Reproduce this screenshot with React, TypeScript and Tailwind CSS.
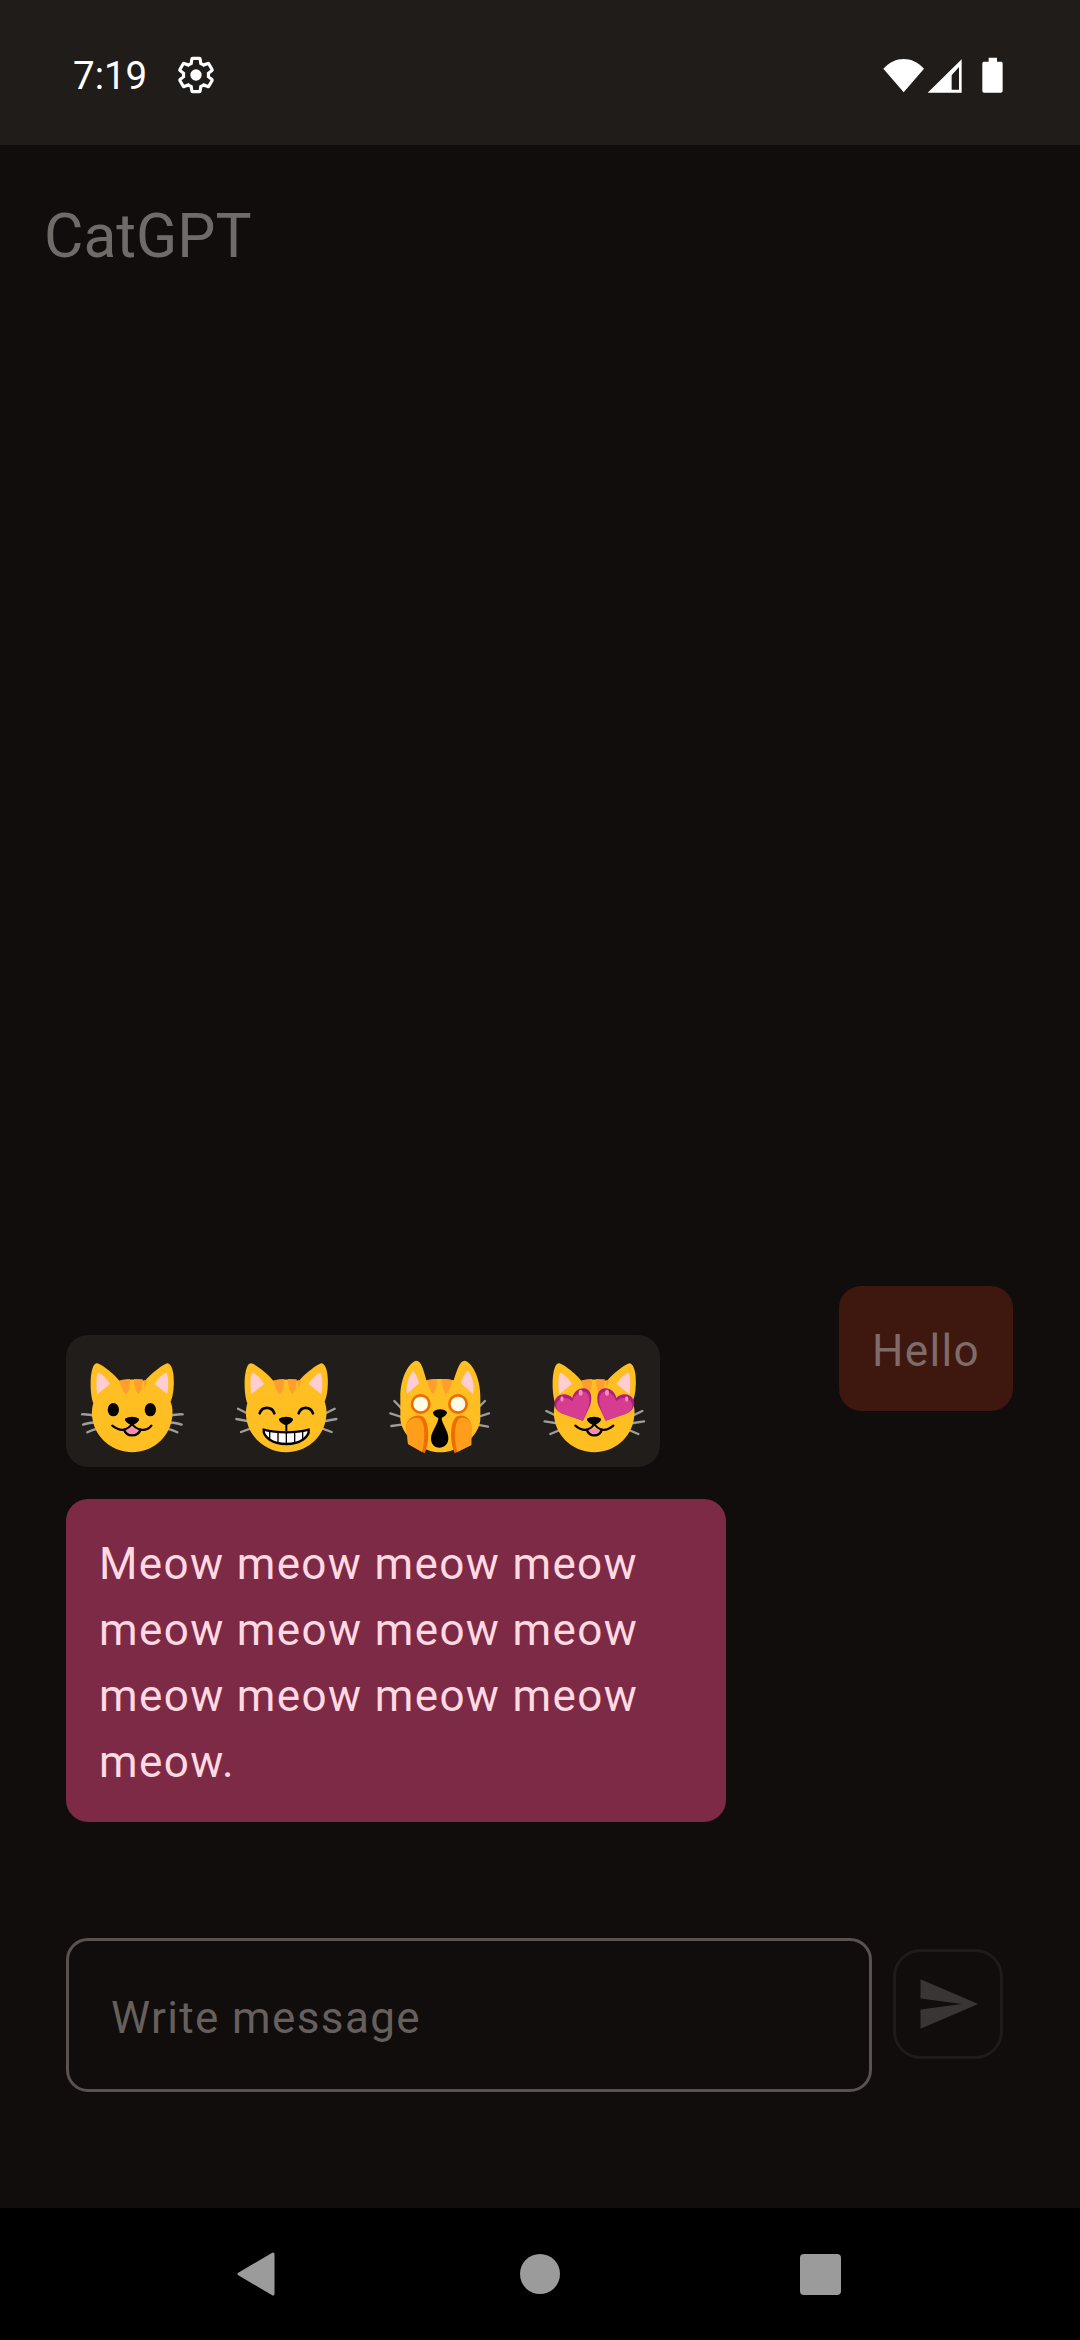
const GEAR =
	"M19.43 12.98c.04-.32.07-.64.07-.98 0-.34-.03-.66-.07-.98l2.11-1.65c.19-.15.24-.42.12-.64l-2-3.46c-.12-.22-.39-.3-.61-.22l-2.49 1c-.52-.4-1.08-.73-1.69-.98l-.38-2.65C14.46 2.18 14.25 2 14 2h-4c-.25 0-.46.18-.49.42l-.38 2.65c-.61.25-1.17.59-1.69.98l-2.49-1c-.23-.09-.49 0-.61.22l-2 3.46c-.13.22-.07.49.12.64l2.11 1.65c-.04.32-.07.65-.07.98 0 .33.03.66.07.98l-2.11 1.65c-.19.15-.24.42-.12.64l2 3.46c.12.22.39.3.61.22l2.49-1c.52.4 1.08.73 1.69.98l.38 2.65c.03.24.24.42.49.42h4c.25 0 .46-.18.49-.42l.38-2.65c.61-.25 1.17-.59 1.69-.98l2.49 1c.23.09.49 0 .61-.22l2-3.46c.12-.22.07-.49-.12-.64l-2.11-1.65z";

const HEAD =
	"M140 130C130 131 124 150 122 180C121 208 124 235 130 250C125 265 125 285 127 295C135 355 190 397 247 397C305 397 358 355 366 295C369 275 368 262 362 245C370 225 373 200 371 170C369 145 361 130 352 130C340 132 305 160 285 182C260 177 235 177 208 182C190 160 152 130 140 130Z";

const NOSE = "M225 296C235 288 258 288 267 296C269 305 252 315 246 315C240 315 223 305 225 296Z";

const HEART =
	"M213 302L150 280C128 272 122 250 132 235C142 220 168 218 181 234C184 214 205 200 222 206C240 212 242 240 232 262Z";
const HEART_INNER =
	"M213 302L152 282C132 274 128 256 138 243C148 231 168 230 181 244C186 224 205 211 220 216C234 222 236 244 228 264Z";

// one side of the whiskers, drawn again mirrored around the middle of the face
const Whiskers: React.FC<{ paths: string[] }> = ({ paths }) => (
	<g fill="none" stroke="#9e9e9e" strokeWidth={7} strokeLinecap="round">
		{paths.map((d) => (
			<path key={d} d={d} />
		))}
		<g transform="translate(494 0) scale(-1 1)">
			{paths.map((d) => (
				<path key={d} d={d} />
			))}
		</g>
	</g>
);

const CatFace: React.FC = () => (
	<>
		<path d={HEAD} fill="#ffbf22" />
		<path d="M145 158C138 165 138 200 142 223L180 192C170 175 155 160 145 158Z" fill="#ffcdd2" />
		<path d="M349 158C339 160 324 175 314 192L352 223C356 200 356 165 349 158Z" fill="#ffcdd2" />
		<path d="M208 182C216 179 228 178 240 177C240 195 238 215 228 223C218 215 212 198 208 182Z" fill="#ff9e2c" />
		<path d="M252 177L278 178C278 195 275 215 265 222C256 215 252 195 252 177Z" fill="#ff9e2c" />
		<path d="M283 179L291 183L284 204C282 195 282 188 283 179Z" fill="#ff9e2c" />
	</>
);

const CatSvg: React.FC<{ children: React.ReactNode }> = ({ children }) => (
	<svg viewBox="81 93 330 330" className="h-[110px] w-[110px] shrink-0">
		{children}
	</svg>
);

const SmileyCat: React.FC = () => (
	<CatSvg>
		<Whiskers
			paths={[
				"M96 283C115 282 130 285 146 292",
				"M99 314C115 308 130 307 146 306",
				"M112 337C125 330 135 327 148 325"
			]}
		/>
		<CatFace />
		<ellipse cx={190} cy={269} rx={17} ry={20} fill="#000" />
		<ellipse cx={301} cy={269} rx={17} ry={20} fill="#000" />
		<path d="M222 330C230 320 240 322 246 322C255 322 265 322 272 331C265 352 230 352 222 330Z" fill="#f48fb1" />
		<path
			d="M187 317C200 327 212 331 222 329C230 352 262 352 272 329C282 331 295 327 304 317"
			fill="none"
			stroke="#000"
			strokeWidth={7}
			strokeLinecap="round"
		/>
		<path d="M222 330C232 326 240 320 246 313C252 320 262 326 272 330" fill="none" stroke="#000" strokeWidth={6} />
		<path d={NOSE} fill="#000" />
	</CatSvg>
);

const GrinCat: React.FC = () => (
	<CatSvg>
		<Whiskers paths={["M102 266L147 289", "M97 297L146 306", "M111 336L149 322"]} />
		<CatFace />
		<g fill="none" stroke="#000" strokeWidth={8} strokeLinecap="round">
			<path d="M167 280C174 258 204 258 211 280" />
			<path d="M284 280C291 258 319 258 327 280" />
		</g>
		<path
			d="M179 329C219 340 274 340 314 329C317 350 289 372 247 372C204 372 177 350 179 329Z"
			fill="#fff"
			stroke="#000"
			strokeWidth={7}
		/>
		<path d="M197 336V360M222 338V369M247 338V371M272 338V369M296 336V360" stroke="#000" strokeWidth={4} />
		<path d="M247 314V334" stroke="#000" strokeWidth={6} />
		<path d={NOSE} fill="#000" />
	</CatSvg>
);

const ScreamCat: React.FC = () => (
	<CatSvg>
		<g transform="translate(5 0)">
			<g fill="none" stroke="#9e9e9e" strokeWidth={7} strokeLinecap="round">
				<path d="M104 243L140 280" />
				<path d="M92 280L135 294" />
				<path d="M95 318L132 313" />
				<path d="M376 243L338 280" />
				<path d="M388 280L345 294" />
				<path d="M385 320L347 313" />
			</g>
			<path
				d="M170 122C150 125 122 170 122 230L122 300C130 355 190 397 242 397C295 397 355 355 362 300L362 230C362 170 335 125 315 122C300 122 292 150 282 181C255 176 230 176 200 181C192 150 185 122 170 122Z"
				fill="#ffbf22"
			/>
			<path d="M160 152C145 170 138 200 142 222L178 190C175 175 165 155 160 152Z" fill="#ffcdd2" />
			<path d="M325 152C340 170 345 200 340 222L304 190C307 175 318 155 325 152Z" fill="#ffcdd2" />
			<path d="M202 180C212 178 222 177 232 177C232 195 230 212 220 222C210 212 205 195 202 180Z" fill="#ff9e2c" />
			<path d="M246 177C256 177 268 178 278 180C275 195 270 212 260 222C250 212 246 195 246 177Z" fill="#ff9e2c" />
			<circle cx={183} cy={252} r={26} fill="#fffde7" stroke="#ef6c00" strokeWidth={8} />
			<circle cx={295} cy={252} r={26} fill="#fffde7" stroke="#ef6c00" strokeWidth={8} />
			<path
				d="M220 277C228 265 255 265 262 277C262 286 250 292 246 294C246 312 268 335 266 358C264 375 252 383 240 383C226 383 214 373 214 356C214 335 236 312 236 294C230 292 220 286 220 277Z"
				fill="#000"
			/>
			<path d="M145 372L140 320C140 295 170 280 190 290C208 305 212 360 195 400Z" fill="#ef6c00" />
			<path d="M145 372L140 320C140 300 165 288 182 296C197 310 197 360 187 396Z" fill="#ff9e1b" />
			<path d="M285 400C268 360 272 305 290 290C310 280 335 295 335 320L335 375Z" fill="#ef6c00" />
			<path d="M293 396C283 360 283 310 298 296C315 288 335 300 335 320L335 375Z" fill="#ff9e1b" />
		</g>
	</CatSvg>
);

const HeartEyesCat: React.FC = () => (
	<CatSvg>
		<Whiskers paths={["M103 273L149 295", "M98 304L149 312", "M115 342L151 327"]} />
		<CatFace />
		<path d={HEART} fill="#ad1f7c" />
		<path d={HEART_INNER} fill="#d63c8f" />
		<ellipse cx={150} cy={237} rx={5} ry={8} fill="#f48fb1" />
		<ellipse cx={206} cy={218} rx={6} ry={9} fill="#f48fb1" />
		<g transform="translate(494 0) scale(-1 1)">
			<path d={HEART} fill="#ad1f7c" />
			<path d={HEART_INNER} fill="#d63c8f" />
		</g>
		<ellipse cx={285} cy={218} rx={6} ry={9} fill="#f48fb1" />
		<ellipse cx={344} cy={237} rx={5} ry={8} fill="#f48fb1" />
		<path d="M226 332C235 322 258 322 268 332C262 352 232 352 226 332Z" fill="#f48fb1" />
		<path
			d="M190 317C202 327 214 331 224 329C232 352 262 352 270 329C280 331 292 327 304 317"
			fill="none"
			stroke="#000"
			strokeWidth={7}
			strokeLinecap="round"
		/>
		<path d="M224 330C234 326 242 320 247 313C252 320 260 326 270 330" fill="none" stroke="#000" strokeWidth={6} />
		<path d={NOSE} fill="#000" />
	</CatSvg>
);

const StatusBar: React.FC = () => (
	<div className="flex h-[145px] shrink-0 items-center justify-between bg-[#201c1a] pl-[73px] pr-[73px] pt-[5px]">
		<div className="flex items-center gap-[29px]">
			<span className="text-[38.5px] leading-[45px] text-white">7:19</span>
			<svg viewBox="0 0 24 24" className="h-[40px] w-[40px]">
				<path d={GEAR} fill="none" stroke="#fff" strokeWidth={1.9} />
				<circle cx={12} cy={12} r={3.4} fill="#fff" />
			</svg>
		</div>
		<svg viewBox="60 80 380 110" className="h-[36.67px] w-[126.67px]">
			<path d="M70 115C105 76 157 76 192 115L131 186Z" fill="#fff" />
			<path d="M203 187L305 87V187Z M275 135V178H297V110Z" fill="#fff" fillRule="evenodd" />
			<path d="M386 94V82H411V94H422C426 94 428 96 428 100V181C428 185 426 187 422 187H373C369 187 367 185 367 181V100C367 96 369 94 373 94Z" fill="#fff" />
		</svg>
	</div>
);

const NavBar: React.FC = () => (
	<div className="flex h-[132px] shrink-0 items-center bg-black pl-[237px]">
		<svg viewBox="0 0 38 44" className="h-[44px] w-[38px]">
			<path d="M2 22L36 2V42Z" fill="#9b9b9b" stroke="#9b9b9b" strokeWidth={3} strokeLinejoin="round" />
		</svg>
		<div className="ml-[245px] h-[40px] w-[40px] rounded-full bg-[#9b9b9b]" />
		<div className="ml-[240px] h-[41px] w-[41px] rounded-[4px] bg-[#9b9b9b]" />
	</div>
);

export default function App() {
	return (
		<div className="flex h-[2340px] w-[1080px] flex-col overflow-hidden bg-[#100d0c] font-['Roboto',sans-serif]">
			<StatusBar />
			<div className="flex flex-1 flex-col">
				<h1 className="pl-[44px] pt-[56px] text-[60.5px] font-normal leading-[72px] text-[#6f6b69]">CatGPT</h1>
				<div className="mt-auto flex items-start justify-between pl-[66px] pr-[67px]">
					<div className="flex flex-col pt-[49px]">
						<div className="flex h-[132px] w-[594px] items-start justify-between rounded-[22px] bg-[#211d1b] px-[11px] pt-[16px]">
							<SmileyCat />
							<GrinCat />
							<ScreamCat />
							<HeartEyesCat />
						</div>
						<div className="mt-[32px] w-[660px] rounded-[22px] bg-[#7d2a46] pb-[27px] pl-[33px] pr-[33px] pt-[32px] text-[44px] leading-[66px] tracking-[1.375px] text-[#ffd9e2]">
							Meow meow meow meow meow meow meow meow meow meow meow meow meow.
						</div>
					</div>
					<div className="rounded-[22px] bg-[#3e170f] pb-[27px] pl-[33px] pr-[33px] pt-[32px] text-[44px] leading-[66px] tracking-[1.375px] text-[#7f6c69]">
						Hello
					</div>
				</div>
				<div className="mb-[116px] mt-[116px] flex items-start pl-[66px]">
					<input
						placeholder="Write message"
						className="h-[154px] w-[806px] rounded-[22px] border-[3px] border-[#5a524f] bg-transparent pl-[42px] pt-[6px] text-[44px] tracking-[1.375px] outline-none placeholder:text-[#675f5c]"
					/>
					<button className="ml-[21px] mt-[11px] flex h-[110px] w-[110px] items-center justify-center rounded-[28px] border-[3px] border-[#1f1b1a]">
						<svg viewBox="0 0 24 24" className="h-[66px] w-[66px]">
							<path d="M2.01 21L23 12 2.01 3 2 10l15 2-15 2z" fill="#393534" />
						</svg>
					</button>
				</div>
			</div>
			<NavBar />
		</div>
	);
}
